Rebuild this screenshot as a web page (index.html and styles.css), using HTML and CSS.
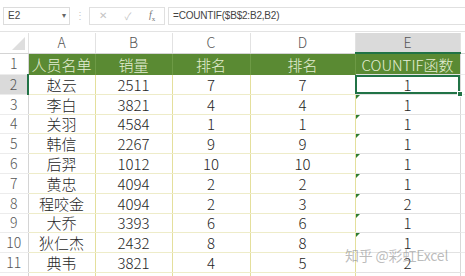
FILE: index.html
```html
<!DOCTYPE html>
<html lang="zh">
<head>
  <meta charset="UTF-8" />
  <title>COUNTIF</title>
  <link rel="stylesheet" href="styles.css">
</head>
<body>
  <div class="sheet">
    <div class="formula-bar">
      <div class="name-box">E2<span class="arrow">▾</span></div>
      <div class="grip">⋮</div>
      <div class="btn-box">
        <span class="fb-btn">✕</span>
        <span class="fb-btn">✓</span>
        <span class="fb-btn fx"><i>f</i><sub>x</sub></span>
      </div>
      <div class="formula">=COUNTIF($B$2:B2,B2)</div>
    </div>

    <table class="grid">
      <colgroup>
        <col class="c-row"><col class="c-a"><col class="c-b"><col class="c-c"><col class="c-d"><col class="c-e"><col>
      </colgroup>
      <tr class="col-head">
        <th class="corner"><span class="tri"></span></th>
        <th>A</th><th>B</th><th>C</th><th>D</th><th class="sel-col">E</th><th class="rest"></th>
      </tr>
      <tr class="r1">
        <th class="row-head">1</th>
        <td class="hd">人员名单</td><td class="hd">销量</td><td class="hd">排名</td><td class="hd">排名</td><td class="hd e">COUNTIF函数</td><td class="rest"></td>
      </tr>
      <tr>
        <th class="row-head sel-row">2</th>
        <td>赵云</td><td>2511</td><td>7</td><td>7</td><td class="e active">1<span class="handle"></span></td><td class="rest"></td>
      </tr>
      <tr>
        <th class="row-head">3</th>
        <td>李白</td><td>3821</td><td>4</td><td>4</td><td class="e flag">1</td><td class="rest"></td>
      </tr>
      <tr>
        <th class="row-head">4</th>
        <td>关羽</td><td>4584</td><td>1</td><td>1</td><td class="e flag">1</td><td class="rest"></td>
      </tr>
      <tr>
        <th class="row-head">5</th>
        <td>韩信</td><td>2267</td><td>9</td><td>9</td><td class="e flag">1</td><td class="rest"></td>
      </tr>
      <tr>
        <th class="row-head">6</th>
        <td>后羿</td><td>1012</td><td>10</td><td>10</td><td class="e flag">1</td><td class="rest"></td>
      </tr>
      <tr>
        <th class="row-head">7</th>
        <td>黄忠</td><td>4094</td><td>2</td><td>2</td><td class="e flag">1</td><td class="rest"></td>
      </tr>
      <tr>
        <th class="row-head">8</th>
        <td>程咬金</td><td>4094</td><td>2</td><td>3</td><td class="e flag">2</td><td class="rest"></td>
      </tr>
      <tr>
        <th class="row-head">9</th>
        <td>大乔</td><td>3393</td><td>6</td><td>6</td><td class="e flag">1</td><td class="rest"></td>
      </tr>
      <tr>
        <th class="row-head">10</th>
        <td>狄仁杰</td><td>2432</td><td>8</td><td>8</td><td class="e flag">1</td><td class="rest"></td>
      </tr>
      <tr>
        <th class="row-head">11</th>
        <td>典韦</td><td>3821</td><td>4</td><td>5</td><td class="e">2</td><td class="rest"></td>
      </tr>
      <tr>
        <th class="row-head"></th>
        <td></td><td></td><td></td><td></td><td class="e"></td><td class="rest"></td>
      </tr>
    </table>

    <div class="watermark">知乎 @彩虹Excel</div>
  </div>
</body>
</html>
```

FILE: styles.css
```css
html, body {
  margin: 0;
  padding: 0;
  background: #fff;
  overflow: hidden;
}

.sheet {
  position: relative;
  width: 465px;
  height: 276px;
  overflow: hidden;
  font-family: "Noto Sans CJK SC", sans-serif;
}

/* formula bar */
.formula-bar {
  display: flex;
  align-items: center;
  height: 32px;
  padding: 0 0 0 3px;
  box-sizing: border-box;
  border-bottom: 1px solid #e3e3e3;
  font-family: "Liberation Sans", "Noto Sans CJK SC", sans-serif;
}

.name-box {
  display: flex;
  align-items: center;
  justify-content: space-between;
  width: 67px;
  height: 18px;
  padding: 0 3px 0 4px;
  box-sizing: border-box;
  border: 1px solid #dcdcdc;
  font-size: 10px;
  color: #444;
}

.arrow {
  font-size: 8px;
  color: #666;
}

.grip {
  width: 19px;
  text-align: center;
  font-size: 10px;
  color: #c8c8c8;
}

.btn-box {
  display: flex;
  align-items: center;
  justify-content: space-around;
  width: 76px;
  height: 18px;
  box-sizing: border-box;
  border: 1px solid #e0e0e0;
  color: #c4c4c4;
  font-size: 10px;
}

.fx {
  color: #777;
  font-family: "Liberation Serif", serif;
  font-size: 10px;
}

.fx sub {
  font-size: 7px;
}

.formula {
  flex: 1;
  height: 18px;
  margin-left: 3px;
  padding-left: 4px;
  box-sizing: border-box;
  border: 1px solid #e0e0e0;
  border-right: none;
  font-size: 10px;
  line-height: 16px;
  color: #444;
  letter-spacing: -0.2px;
}

/* grid */
.grid {
  margin-top: 1px;
  border-collapse: collapse;
  table-layout: fixed;
  width: 470px;
}

.c-row { width: 28px; }
.c-a { width: 67px; }
.c-b { width: 77px; }
.c-c { width: 78px; }
.c-d { width: 105px; }
.c-e { width: 105px; }

.grid th, .grid td {
  height: 18.8px;
  padding: 0;
  text-align: center;
  vertical-align: middle;
  font-weight: 300;
  line-height: 15px;
  white-space: nowrap;
  overflow: visible;
}

.grid .col-head th {
  height: 19px;
  font-size: 14px;
  color: #555;
  border-right: 1px solid #e2e2e2;
  border-bottom: 1px solid #d4d4d4;
}

.corner {
  position: relative;
}

.tri {
  position: absolute;
  right: 3px;
  bottom: 3px;
  width: 0;
  height: 0;
  border-left: 13px solid transparent;
  border-bottom: 13px solid #dedede;
}

.grid .col-head .sel-col {
  background: #dadada;
  border-bottom: 2px solid #217346;
}

.row-head {
  font-size: 14px;
  color: #555;
  border-right: 1px solid #d4d4d4;
  border-bottom: 1px solid #ececec;
}

.sel-row {
  background: #dadada;
  border-right: 2px solid #217346;
}

.grid .r1 th, .grid .r1 td {
  height: 20px;
}

.grid td {
  font-size: 15px;
  color: #262626;
  border-right: 1px solid #e4df9c;
  border-bottom: 1px solid #eeecc9;
}

.grid td.hd {
  background: #5a8a33;
  color: #e4eed4;
  border-right: 1px solid #6d9a45;
  border-bottom: none;
}

.grid td.e {
  position: relative;
  border-left: 1px solid #d8d8d8;
  border-right: 1px solid #d8d8d8;
  border-bottom: 1px solid #e2e2e2;
}

.grid td.rest {
  border-right: none;
  border-bottom: 1px solid #ececec;
}

.grid td.active {
  outline: 2px solid #217346;
  outline-offset: -2px;
}

.handle {
  position: absolute;
  right: -3px;
  bottom: -3px;
  width: 4px;
  height: 4px;
  background: #217346;
  border: 1px solid #fff;
}

.flag::before {
  content: "";
  position: absolute;
  left: 0;
  top: 0;
  width: 0;
  height: 0;
  border-top: 4px solid #2e7d32;
  border-right: 4px solid transparent;
}

.watermark {
  position: absolute;
  left: 345px;
  top: 245px;
  font-size: 14px;
  line-height: 20px;
  color: rgba(130, 130, 130, 0.55);
  letter-spacing: -0.2px;
}
```
